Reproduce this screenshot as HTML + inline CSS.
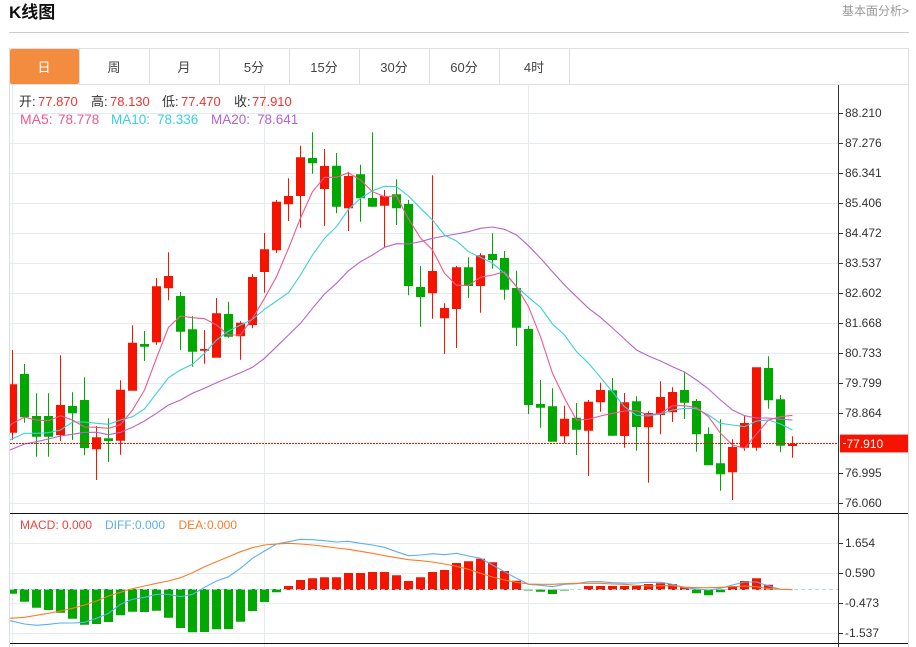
<!DOCTYPE html>
<html lang="zh">
<head>
<meta charset="utf-8">
<title>K线图</title>
<style>
html,body{margin:0;padding:0;background:#fff;width:916px;height:647px;overflow:hidden}
svg{display:block;position:absolute;left:0;top:0}
text{font-family:"Liberation Sans","Noto Sans CJK SC",sans-serif}
.ax{font-size:12px;fill:#333}
.tab{font-size:13px;fill:#444;text-anchor:middle}
.r{fill:#f5302e;font-size:13px}
.k{fill:#333;font-size:13px}
</style>
</head>
<body>
<svg width="916" height="647" viewBox="0 0 916 647" xmlns="http://www.w3.org/2000/svg">
<defs><clipPath id="c"><rect x="10" y="85" width="828" height="562"/></clipPath></defs>

<text x="9" y="18" style="font-size:17px;font-weight:bold;fill:#111">K线图</text>
<text x="842" y="15" style="font-size:12px;fill:#999">基本面分析&gt;</text>
<rect x="9" y="32" width="900" height="1" fill="#ccc"/>

<!-- frame -->
<rect x="9" y="48" width="900" height="1" fill="#e0e0e0"/>
<rect x="9" y="48" width="1" height="599" fill="#ddd"/>
<rect x="908" y="48" width="1" height="599" fill="#ddd"/>
<rect x="10" y="84" width="898" height="1" fill="#e2e2e2"/>

<!-- tabs -->
<rect x="10" y="49" width="69" height="35" rx="2" fill="#f48c40"/>
<path d="M79 49h1v35h-1zM149 49h1v35h-1zM219 49h1v35h-1zM289 49h1v35h-1zM359 49h1v35h-1zM429 49h1v35h-1zM499 49h1v35h-1zM569 49h1v35h-1z" fill="#ddd"/>
<text class="tab" x="44" y="72" style="fill:#fff">日</text>
<text class="tab" x="114" y="72">周</text>
<text class="tab" x="184" y="72">月</text>
<text class="tab" x="254" y="72">5分</text>
<text class="tab" x="324" y="72">15分</text>
<text class="tab" x="394" y="72">30分</text>
<text class="tab" x="464" y="72">60分</text>
<text class="tab" x="534" y="72">4时</text>

<!-- grid -->
<path d="M10 113h828v1h-828zM10 143h828v1h-828zM10 173h828v1h-828zM10 203h828v1h-828zM10 233h828v1h-828zM10 263h828v1h-828zM10 293h828v1h-828zM10 323h828v1h-828zM10 353h828v1h-828zM10 383h828v1h-828zM10 413h828v1h-828zM10 473h828v1h-828zM10 503h828v1h-828zM10 543h828v1h-828zM10 573h828v1h-828zM10 603h828v1h-828zM10 633h828v1h-828zM12 85h1v562h-1zM264 85h1v562h-1zM528 85h1v562h-1z" fill="#e4ebf1"/>

<g clip-path="url(#c)">
<!-- red candles -->
<path fill="#f51400" d="M12 350h1V440h-1zM10 384.3h7V432.7h-7zM60 355.3h1V441h-1zM56 405h9V435h-9zM96 426h1V480h-1zM92 437.3h9V449.3h-9zM120 380.3h1V454.7h-1zM116 389.7h9V440.7h-9zM132 325.3h1V390.7h-1zM128 342.7h9V390.7h-9zM156 278h1V344.7h-1zM152 286.3h9V342.3h-9zM168 252.3h1V300.3h-1zM164 276h9V288.3h-9zM204 330h1V363.7h-1zM200 349h9V350.7h-9zM216 298h1V357h-1zM212 313.3h9V357.7h-9zM240 321.3h1V359.7h-1zM236 322.7h9V336.3h-9zM252 274h1V328.3h-1zM248 277h9V325h-9zM264 233h1V292.7h-1zM260 249.3h9V272h-9zM276 200h1V253.3h-1zM272 201.7h9V250.3h-9zM288 178.3h1V221h-1zM284 196h9V204.3h-9zM300 145.7h1V227.7h-1zM296 157.3h9V196h-9zM324 149h1V226h-1zM320 166h9V189h-9zM348 171.7h1V231h-1zM344 176h9V208.3h-9zM384 190h1V247.3h-1zM380 196h9V205.7h-9zM432 175.3h1V318.7h-1zM428 271h9V293.3h-9zM444 303.3h1V354h-1zM440 308h9V318.3h-9zM456 266h1V348h-1zM452 267.3h9V309h-9zM480 253.3h1V312.7h-1zM476 255.3h9V286h-9zM564 405.7h1V443.3h-1zM560 418.7h9V436.3h-9zM588 400h1V476h-1zM584 401.7h9V430.7h-9zM600 382.7h1V411.7h-1zM596 390h9V402.3h-9zM624 393h1V447.7h-1zM620 402.3h9V436h-9zM648 411.3h1V482.7h-1zM644 413h9V427.3h-9zM660 381.3h1V434.3h-1zM656 397h9V415h-9zM672 387.3h1V422h-1zM668 392h9V412.3h-9zM732 439.3h1V500h-1zM728 447h9V472.3h-9zM744 415.3h1V450.7h-1zM740 423h9V447.7h-9zM756 367.3h1V450.7h-1zM752 367.3h9V447.7h-9zM792 436.3h1V457.7h-1zM788 443.7h9V446h-9z"/>
<!-- green candles -->
<path fill="#00a800" d="M24 364h1V422.7h-1zM20 374h9V417.3h-9zM36 393.3h1V456.7h-1zM32 416h9V436.7h-9zM48 393.3h1V456.7h-1zM44 416h9V436.7h-9zM72 392.3h1V440h-1zM68 406h9V413.3h-9zM84 377.3h1V455.3h-1zM80 400h9V448h-9zM108 418.3h1V462h-1zM104 438.3h9V441h-9zM144 331h1V361h-1zM140 344h9V346.7h-9zM180 292h1V350h-1zM176 296h9V331.7h-9zM192 316h1V366.7h-1zM188 329.3h9V351.7h-9zM228 301.7h1V337.7h-1zM224 314h9V336.7h-9zM312 132.3h1V173.7h-1zM308 158h9V163.3h-9zM336 153h1V213.3h-1zM332 165.7h9V206.7h-9zM360 164.7h1V221.7h-1zM356 174.3h9V198.3h-9zM372 132.3h1V207h-1zM368 198h9V206.7h-9zM396 179.3h1V225h-1zM392 194.3h9V208.3h-9zM408 200h1V295.3h-1zM404 204h9V286h-9zM420 266h1V326.7h-1zM416 287h9V297h-9zM468 257.3h1V298h-1zM464 267.3h9V286h-9zM492 233.3h1V268.7h-1zM488 254h9V260h-9zM504 251h1V299.7h-1zM500 258h9V289.7h-9zM516 270.7h1V346h-1zM512 288h9V327.7h-9zM528 326h1V414h-1zM524 329h9V405h-9zM540 380h1V427.7h-1zM536 404h9V407.7h-9zM552 388.3h1V441.7h-1zM548 406.3h9V441.7h-9zM576 403h1V455h-1zM572 417.7h9V429.7h-9zM612 378h1V436h-1zM608 390.3h9V435.7h-9zM636 396.3h1V450.7h-1zM632 401.3h9V427h-9zM684 371.7h1V419h-1zM680 390h9V402.7h-9zM696 399h1V451.7h-1zM692 401h9V434.3h-9zM708 427.3h1V465h-1zM704 434h9V465.3h-9zM720 419.3h1V490.7h-1zM716 463.3h9V474.3h-9zM768 356.3h1V408.7h-1zM764 368h9V400.3h-9zM780 395h1V452.3h-1zM776 399.3h9V445.7h-9z"/>

<!-- MA20 -->
<polyline fill="none" stroke="#b862cf" stroke-width="1.1" points="10,450 24.5,444 36.5,441.7 48.5,439 60.5,436 72.5,434.3 84.5,432.3 96.5,432.3 108.5,434.7 120.5,432.3 132.5,427.3 144.5,421 156.5,413.3 168.5,405 180.5,400 192.5,393.3 204.5,388.3 216.5,382.7 228.5,377.7 240.5,372.7 252.5,367.3 264.5,358.3 276.5,346.7 288.5,335 300.5,323.3 312.5,308.3 324.5,294 336.5,283.3 348.5,270.7 360.5,261.7 372.5,255 384.5,247.3 396.5,243.7 408.5,244 420.5,241.7 432.5,238.3 444.5,236 456.5,234 468.5,231.7 480.5,228.3 492.5,227 504.5,229.3 516.5,235 528.5,245.7 540.5,258.3 552.5,271.7 564.5,285 576.5,296.7 588.5,308.3 600.5,317.3 612.5,328 624.5,339 636.5,350 648.5,356 660.5,361 672.5,366.7 684.5,372 696.5,380 708.5,389 720.5,400 732.5,410 744.5,415.7 756.5,418 768.5,418 780.5,419.3 792.5,420"/>
<!-- MA10 -->
<polyline fill="none" stroke="#3bcfe0" stroke-width="1.1" points="10,440 24.5,433.3 36.5,433.3 48.5,432.7 60.5,430 72.5,422 84.5,422 96.5,423.3 108.5,424.3 120.5,420 132.5,416.7 144.5,409 156.5,393.3 168.5,377.7 180.5,370 192.5,364.3 204.5,353.3 216.5,340 228.5,331 240.5,325 252.5,319.3 264.5,309.3 276.5,301 288.5,292.7 300.5,275 312.5,255 324.5,238.3 336.5,226.7 348.5,209.3 360.5,198.3 372.5,190.7 384.5,186.3 396.5,186.7 408.5,196 420.5,208.3 432.5,220 444.5,235 456.5,241 468.5,251.7 480.5,257.3 492.5,263.3 504.5,273.3 516.5,286.7 528.5,297.3 540.5,307.3 552.5,324 564.5,335 576.5,351.7 588.5,363.3 600.5,377.3 612.5,392 624.5,406.7 636.5,415.3 648.5,416 660.5,414 672.5,410 684.5,408.3 696.5,408.7 708.5,415 720.5,423.3 732.5,425 744.5,426.7 756.5,421 768.5,420 780.5,424 792.5,430"/>
<!-- MA5 -->
<polyline fill="none" stroke="#f0588f" stroke-width="1.1" points="10,426 12.5,423.3 24.5,417.3 36.5,420 48.5,420.7 60.5,415.7 72.5,420 84.5,427 96.5,427.3 108.5,428.3 120.5,424.7 132.5,410 144.5,390 156.5,358 168.5,327.3 180.5,316 192.5,317.7 204.5,318.7 216.5,325 228.5,335 240.5,335 252.5,318.3 264.5,298.3 276.5,276.7 288.5,248.3 300.5,218 312.5,191.7 324.5,177.3 336.5,177.3 348.5,172.7 360.5,180 372.5,191.7 384.5,196.7 396.5,196 408.5,219 420.5,238 432.5,250 444.5,273.3 456.5,285.3 468.5,285.3 480.5,277.3 492.5,275 504.5,271.7 516.5,286.7 528.5,306.7 540.5,336.7 552.5,373.3 564.5,398.3 576.5,420 588.5,419.3 600.5,416 612.5,413.3 624.5,411 636.5,410.7 648.5,415 660.5,413.3 672.5,405.7 684.5,405.7 696.5,407.7 708.5,416.7 720.5,433.3 732.5,445 744.5,448.3 756.5,434 768.5,420 780.5,416.7 792.5,415.3"/>

<!-- last price line -->
<line x1="10" y1="443.5" x2="838" y2="443.5" stroke="#f51400" stroke-width="1" stroke-dasharray="2 1" shape-rendering="crispEdges"/>

<!-- MACD bars -->
<path fill="#00a800" d="M10 589h7V593.7h-7zM20 589h9V601.7h-9zM32 589h9V607.7h-9zM44 589h9V610h-9zM56 589h9V612.7h-9zM68 589h9V618.7h-9zM80 589h9V624.7h-9zM92 589h9V624h-9zM104 589h9V622h-9zM116 589h9V615.3h-9zM128 589h9V611.7h-9zM140 589h9V612h-9zM152 589h9V610.7h-9zM164 589h9V617.7h-9zM176 589h9V628h-9zM188 589h9V632.3h-9zM200 589h9V632h-9zM212 589h9V629.3h-9zM224 589h9V629h-9zM236 589h9V621.7h-9zM248 589h9V611h-9zM260 589h9V602h-9zM272 589h9V592.3h-9zM536 589.5h9V591.7h-9zM548 589.5h9V594h-9zM692 589.5h9V593.3h-9zM704 589.5h9V595.3h-9zM716 589.5h9V592.3h-9z"/>
<path fill="#7fd47f" d="M524 589.5h9V591h-9zM560 589.5h9V591h-9z"/>
<path fill="#f51400" d="M284 586h9V590h-9zM296 580h9V590h-9zM308 578.3h9V590h-9zM320 577.3h9V590h-9zM332 577.3h9V590h-9zM344 573h9V590h-9zM356 573h9V590h-9zM368 572h9V590h-9zM380 572h9V590h-9zM392 575.3h9V590h-9zM404 581h9V590h-9zM416 577.3h9V590h-9zM428 572h9V590h-9zM440 570h9V590h-9zM452 563h9V590h-9zM464 561.3h9V590h-9zM476 558.7h9V590h-9zM488 562.3h9V590h-9zM500 571h9V590h-9zM512 580.7h9V590h-9zM584 586h9V590h-9zM596 586h9V590h-9zM608 586h9V590h-9zM620 586h9V590h-9zM632 586h9V590h-9zM644 584h9V590h-9zM656 583.3h9V590h-9zM668 584h9V590h-9zM680 587.3h9V590h-9zM728 586h9V590h-9zM740 581h9V590h-9zM752 578.3h9V590h-9zM764 584.7h9V590h-9z"/>
<line x1="10" y1="589.5" x2="838" y2="589.5" stroke="#a6d8ea" stroke-width="1" stroke-dasharray="4 3" opacity=".85"/>

<!-- DIFF -->
<polyline fill="none" stroke="#5cafef" stroke-width="1.1" points="10,620.7 24.5,624 36.5,625.3 48.5,624.3 60.5,623 72.5,623 84.5,622.3 96.5,618.3 108.5,613.3 120.5,604.3 132.5,599.3 144.5,597.3 156.5,594.3 168.5,594.3 180.5,596.7 192.5,594.3 204.5,587.3 216.5,581 228.5,576.7 240.5,568.3 252.5,558.3 264.5,551 276.5,544 288.5,541.7 300.5,539.3 312.5,539.7 324.5,540.7 336.5,542 348.5,541.3 360.5,543.3 372.5,545 384.5,547.3 396.5,551.7 408.5,555.7 420.5,555 432.5,553.7 444.5,554.7 456.5,553.3 468.5,556 480.5,558.3 492.5,565 504.5,571.7 516.5,578.3 528.5,584.3 540.5,585.3 552.5,586.7 564.5,584.3 576.5,583.7 588.5,581.7 600.5,581.7 612.5,582.7 624.5,583 636.5,583 648.5,582.3 660.5,582.3 672.5,584.3 684.5,587.7 696.5,589 708.5,590 720.5,588.3 732.5,585 744.5,582 756.5,582 768.5,586 780.5,589.3 792.5,589.6"/>
<!-- DEA -->
<polyline fill="none" stroke="#f97d27" stroke-width="1.1" points="10,618.3 24.5,617.3 36.5,615.3 48.5,613.3 60.5,611 72.5,608.3 84.5,605 96.5,601 108.5,596 120.5,592.3 132.5,588.7 144.5,586 156.5,583.3 168.5,581 180.5,577.7 192.5,572.7 204.5,566.7 216.5,561.7 228.5,556.7 240.5,551.7 252.5,547.7 264.5,545 276.5,544 288.5,543.3 300.5,544 312.5,545 324.5,546.3 336.5,548 348.5,549.3 360.5,551.3 372.5,553.3 384.5,555.7 396.5,557.7 408.5,559.7 420.5,560.7 432.5,562 444.5,564 456.5,566.3 468.5,569.3 480.5,573.3 492.5,577 504.5,580 516.5,582.3 528.5,584 540.5,584.3 552.5,584.3 564.5,583.7 576.5,583.3 588.5,583.3 600.5,583.3 612.5,584 624.5,584.3 636.5,585.3 648.5,586 660.5,585.7 672.5,585.7 684.5,587 696.5,587.7 708.5,587.7 720.5,587.3 732.5,586.7 744.5,586 756.5,586.7 768.5,588.7 780.5,589.3 792.5,589.6"/>
</g>

<!-- separators -->
<rect x="10" y="513" width="898" height="1" fill="#111"/>
<rect x="10" y="643" width="898" height="1" fill="#111"/>

<!-- axis -->
<rect x="838" y="85" width="1" height="562" fill="#333"/>
<path fill="#333" d="M839 113h4v1h-4zM839 143h4v1h-4zM839 173h4v1h-4zM839 203h4v1h-4zM839 233h4v1h-4zM839 263h4v1h-4zM839 293h4v1h-4zM839 323h4v1h-4zM839 353h4v1h-4zM839 383h4v1h-4zM839 413h4v1h-4zM839 473h4v1h-4zM839 503h4v1h-4zM839 543h4v1h-4zM839 573h4v1h-4zM839 603h4v1h-4zM839 633h4v1h-4z"/>
<text class="ax" x="845" y="117">88.210</text>
<text class="ax" x="845" y="147">87.276</text>
<text class="ax" x="845" y="177">86.341</text>
<text class="ax" x="845" y="207">85.406</text>
<text class="ax" x="845" y="237">84.472</text>
<text class="ax" x="845" y="267">83.537</text>
<text class="ax" x="845" y="297">82.602</text>
<text class="ax" x="845" y="327">81.668</text>
<text class="ax" x="845" y="357">80.733</text>
<text class="ax" x="845" y="387">79.799</text>
<text class="ax" x="845" y="417">78.864</text>
<text class="ax" x="845" y="477">76.995</text>
<text class="ax" x="845" y="507">76.060</text>
<text class="ax" x="845" y="547">1.654</text>
<text class="ax" x="845" y="577">0.590</text>
<text class="ax" x="845" y="607">-0.473</text>
<text class="ax" x="845" y="637">-1.537</text>

<!-- last price label -->
<rect x="840" y="434.5" width="68" height="18" fill="#f51400"/>
<rect x="840" y="434" width="68" height="1" fill="#f9a09a"/>
<rect x="840" y="452" width="68" height="1" fill="#f9a09a"/>
<rect x="843" y="443" width="3" height="1" fill="#fff"/>
<text x="846.5" y="448" style="font-size:12px;fill:#fff">77.910</text>

<!-- legend -->
<text class="k" x="19" y="106">开:</text><text class="r" x="38" y="106">77.870</text>
<text class="k" x="91" y="106">高:</text><text class="r" x="110" y="106">78.130</text>
<text class="k" x="162" y="106">低:</text><text class="r" x="181" y="106">77.470</text>
<text class="k" x="234" y="106">收:</text><text class="r" x="252" y="106">77.910</text>
<text x="20" y="124" style="font-size:14px;fill:#f0588f">MA5:</text><text x="58" y="124" style="font-size:13.5px;fill:#f0588f">78.778</text>
<text x="111" y="124" style="font-size:13.5px;fill:#36cfe0">MA10:</text><text x="157" y="124" style="font-size:13.5px;fill:#36cfe0">78.336</text>
<text x="211" y="124" style="font-size:13.5px;fill:#b862cf">MA20:</text><text x="257" y="124" style="font-size:13.5px;fill:#b862cf">78.641</text>

<text x="20" y="529" style="font-size:12px;fill:#f5403c">MACD:</text><text x="62" y="529" style="font-size:12px;fill:#f5403c">0.000</text>
<text x="105" y="529" style="font-size:12px;fill:#5cafef">DIFF:</text><text x="135" y="529" style="font-size:12px;fill:#5cafef">0.000</text>
<text x="178.5" y="529" style="font-size:12px;fill:#f97d27">DEA:</text><text x="207" y="529" style="font-size:12px;fill:#f97d27">0.000</text>
</svg>
</body>
</html>
